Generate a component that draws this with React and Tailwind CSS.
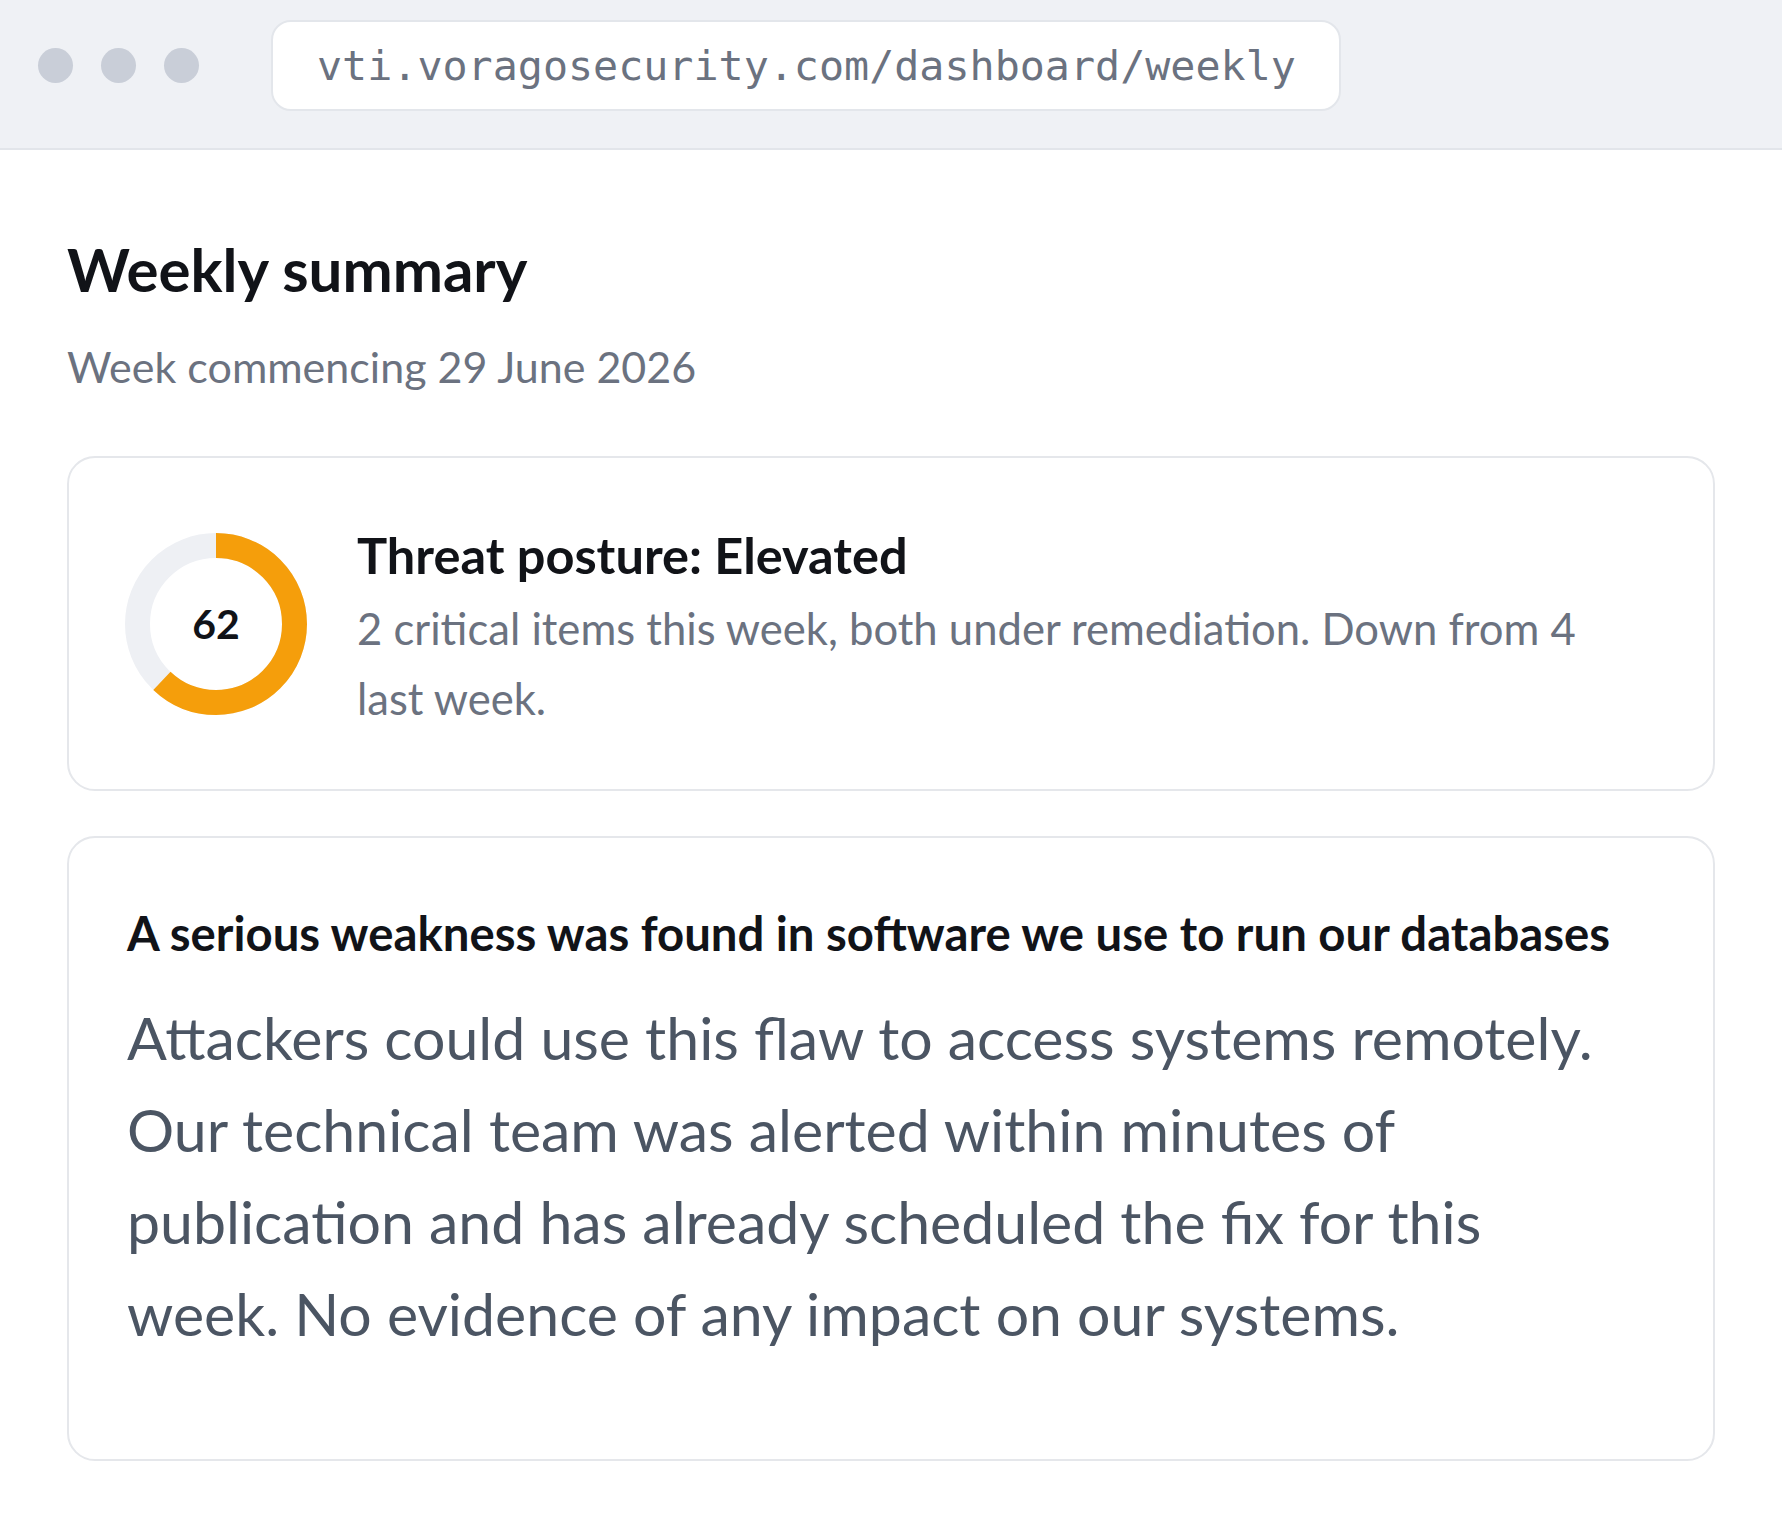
import React from 'react';

const ScoreRing = ({ value }) => {
  const r = 78.5;
  const c = 2 * Math.PI * r;
  return (
    <div className="relative w-[182px] h-[182px] shrink-0 mt-[8px]">
      <svg width="182" height="182" viewBox="0 0 182 182" className="-rotate-90">
        <circle cx="91" cy="91" r={r} fill="none" stroke="#eef0f4" strokeWidth="25" />
        <circle
          cx="91"
          cy="91"
          r={r}
          fill="none"
          stroke="#f59e0b"
          strokeWidth="25"
          strokeDasharray={`${(c * value) / 100} ${c}`}
        />
      </svg>
      <div className="absolute inset-0 flex items-center justify-center text-[41px] font-bold text-[#111318]">
        {value}
      </div>
    </div>
  );
};

export default function App() {
  return (
    <div className="min-h-screen bg-white font-['Lato',sans-serif]">
      {/* Browser chrome */}
      <div className="flex items-start bg-[#eff1f5] border-b-[2px] border-[#e2e5ea] pt-[20px] pb-[37px] pl-[38px]">
        <div className="flex gap-[28px] h-[91px] items-center">
          <span className="w-[35px] h-[35px] rounded-full bg-[#c9ced8]" />
          <span className="w-[35px] h-[35px] rounded-full bg-[#c9ced8]" />
          <span className="w-[35px] h-[35px] rounded-full bg-[#c9ced8]" />
        </div>
        <div className="ml-[72px] h-[91px] flex items-center bg-white border-[2px] border-[#e3e6eb] rounded-[20px] pl-[44px] pr-[43px]">
          <span className="font-['DejaVu_Sans_Mono',monospace] text-[41.7px] text-[#6b7280] leading-none">
            vti.voragosecurity.com/dashboard/weekly
          </span>
        </div>
      </div>

      {/* Content */}
      <div className="px-[67px] pt-[83px]">
        <h1 className="text-[60px] leading-[72px] font-bold text-[#111318]">Weekly summary</h1>
        <p className="mt-[32px] text-[43px] leading-[60px] text-[#6b7280]">Week commencing 29 June 2026</p>

        {/* Threat posture */}
        <div className="mt-[59px] flex items-start gap-[50px] border-[2px] border-[#e5e7eb] rounded-[28px] pl-[56px] pr-[56px] pt-[67px] pb-[56px]">
          <ScoreRing value={62} />
          <div className="flex-1">
            <h2 className="text-[50.5px] leading-[60px] font-bold text-[#111318]">Threat posture: Elevated</h2>
            <p className="mt-[8px] text-[43.6px] leading-[70px] text-[#6b7280] pr-[60px]">
              2 critical items this week, both under remediation. Down from 4 last week.
            </p>
          </div>
        </div>

        {/* Finding */}
        <div className="mt-[45px] border-[2px] border-[#e5e7eb] rounded-[28px] pl-[58px] pr-[56px] pt-[66px] pb-[99px]">
          <h3 className="text-[47.3px] leading-[57px] font-bold text-[#111318]">
            A serious weakness was found in software we use to run our databases
          </h3>
          <p className="mt-[31px] text-[59px] leading-[92px] text-[#4b5563]">
            Attackers could use this flaw to access systems remotely.
            <br />
            Our technical team was alerted within minutes of
            <br />
            publication and has already scheduled the fix for this
            <br />
            week. No evidence of any impact on our systems.
          </p>
        </div>
      </div>
    </div>
  );
}
